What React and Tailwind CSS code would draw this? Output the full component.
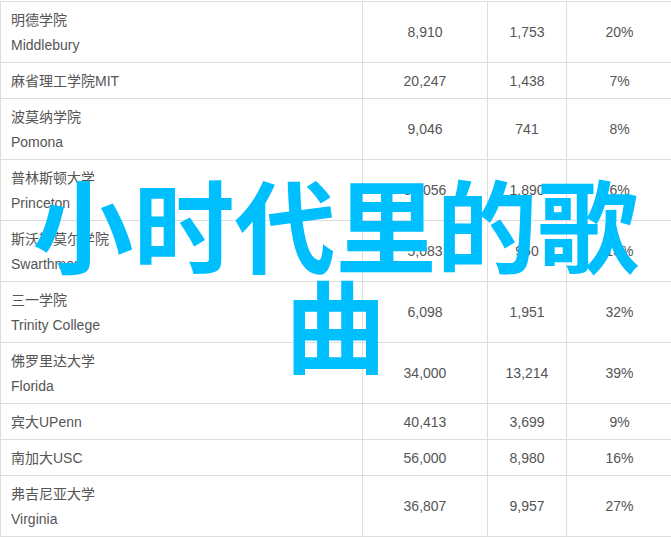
const rows = [
  ["明德学院", "Middlebury", "8,910", "1,753", "20%"],
  ["麻省理工学院MIT", null, "20,247", "1,438", "7%"],
  ["波莫纳学院", "Pomona", "9,046", "741", "8%"],
  ["普林斯顿大学", "Princeton", "31,056", "1,890", "6%"],
  ["斯沃斯莫尔学院", "Swarthmore", "5,083", "950", "18%"],
  ["三一学院", "Trinity College", "6,098", "1,951", "32%"],
  ["佛罗里达大学", "Florida", "34,000", "13,214", "39%"],
  ["宾大UPenn", null, "40,413", "3,699", "9%"],
  ["南加大USC", null, "56,000", "8,980", "16%"],
  ["弗吉尼亚大学", "Virginia", "36,807", "9,957", "27%"],
];

export default function App() {
  return (
    <div className="relative h-[537px] w-[671px] overflow-hidden bg-white font-['Liberation_Sans','Noto_Sans_CJK_SC',sans-serif] text-sm text-[#555]">
      <table className="mt-px w-[672px] table-fixed border-collapse">
        <colgroup>
          <col className="w-[362px]" />
          <col className="w-[125px]" />
          <col className="w-[79px]" />
          <col className="w-[106px]" />
        </colgroup>
        <tbody>
          {rows.map((r) => (
            <tr key={r[0]} className={r[1] ? "h-[61px]" : "h-9"}>
              <td className="border border-[#ddd] pt-px pr-[11px] pb-0 pl-[10px]">
                <p className="leading-[25px]">{r[0]}</p>
                {r[1] && <p className="leading-[25px]">{r[1]}</p>}
              </td>
              <td className="border border-[#ddd] p-0 text-center">{r[2]}</td>
              <td className="border border-[#ddd] p-0 text-center">{r[3]}</td>
              <td className="border border-[#ddd] p-0 text-center">{r[4]}</td>
            </tr>
          ))}
        </tbody>
      </table>
      <div className="absolute inset-x-0 top-[181px] text-center text-[101px] font-bold leading-[100px] text-[#00bfff]">
        小时代里的歌曲
      </div>
    </div>
  );
}
